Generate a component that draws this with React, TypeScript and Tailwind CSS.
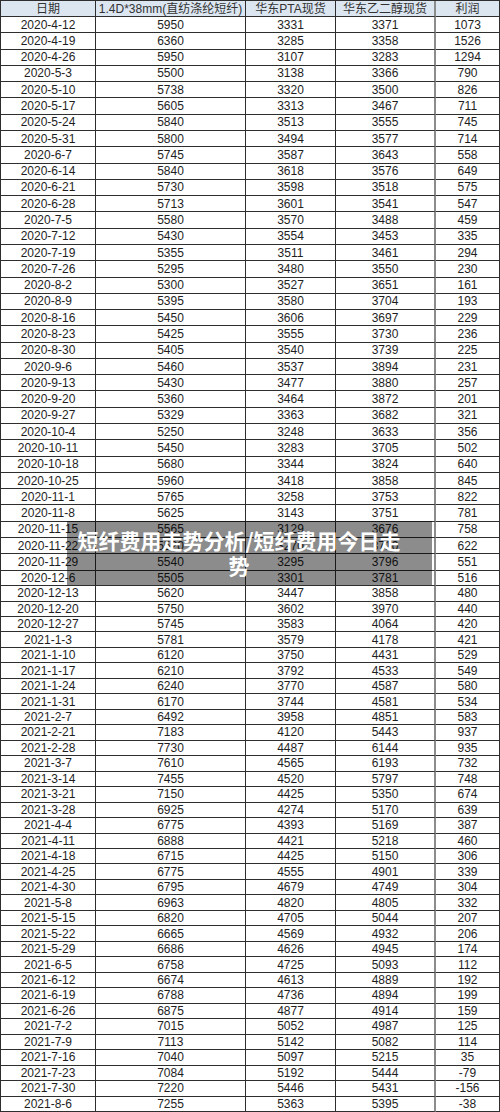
import React from 'react';

// date, 1.4D*38mm fiber, PTA spot, MEG spot, profit
const rows: [string, string, string, string, string][] = [
  ['2020-4-12', '5950', '3331', '3371', '1073'],
  ['2020-4-19', '6360', '3285', '3358', '1526'],
  ['2020-4-26', '5950', '3107', '3283', '1294'],
  ['2020-5-3', '5500', '3138', '3366', '790'],
  ['2020-5-10', '5738', '3320', '3500', '826'],
  ['2020-5-17', '5605', '3313', '3467', '711'],
  ['2020-5-24', '5840', '3513', '3555', '745'],
  ['2020-5-31', '5800', '3494', '3577', '714'],
  ['2020-6-7', '5745', '3587', '3643', '558'],
  ['2020-6-14', '5840', '3618', '3576', '649'],
  ['2020-6-21', '5730', '3598', '3518', '575'],
  ['2020-6-28', '5713', '3601', '3541', '547'],
  ['2020-7-5', '5580', '3570', '3488', '459'],
  ['2020-7-12', '5430', '3554', '3453', '335'],
  ['2020-7-19', '5355', '3511', '3461', '294'],
  ['2020-7-26', '5295', '3480', '3550', '230'],
  ['2020-8-2', '5300', '3527', '3651', '161'],
  ['2020-8-9', '5395', '3580', '3704', '193'],
  ['2020-8-16', '5450', '3606', '3697', '229'],
  ['2020-8-23', '5425', '3555', '3730', '236'],
  ['2020-8-30', '5405', '3540', '3739', '225'],
  ['2020-9-6', '5460', '3537', '3894', '231'],
  ['2020-9-13', '5430', '3477', '3880', '257'],
  ['2020-9-20', '5360', '3464', '3872', '201'],
  ['2020-9-27', '5329', '3363', '3682', '321'],
  ['2020-10-4', '5250', '3248', '3633', '356'],
  ['2020-10-11', '5450', '3283', '3705', '502'],
  ['2020-10-18', '5680', '3344', '3824', '640'],
  ['2020-10-25', '5960', '3418', '3858', '845'],
  ['2020-11-1', '5765', '3258', '3753', '822'],
  ['2020-11-8', '5625', '3143', '3751', '781'],
  ['2020-11-15', '5565', '3129', '3676', '758'],
  ['2020-11-22', '5520', '3270', '3710', '622'],
  ['2020-11-29', '5540', '3295', '3796', '551'],
  ['2020-12-6', '5505', '3301', '3781', '516'],
  ['2020-12-13', '5620', '3447', '3858', '480'],
  ['2020-12-20', '5750', '3602', '3970', '440'],
  ['2020-12-27', '5745', '3583', '4064', '420'],
  ['2021-1-3', '5781', '3579', '4178', '421'],
  ['2021-1-10', '6120', '3750', '4431', '529'],
  ['2021-1-17', '6210', '3792', '4533', '549'],
  ['2021-1-24', '6240', '3770', '4587', '580'],
  ['2021-1-31', '6170', '3744', '4581', '534'],
  ['2021-2-7', '6492', '3958', '4851', '583'],
  ['2021-2-21', '7183', '4120', '5443', '937'],
  ['2021-2-28', '7730', '4487', '6144', '935'],
  ['2021-3-7', '7610', '4565', '6193', '732'],
  ['2021-3-14', '7455', '4520', '5797', '748'],
  ['2021-3-21', '7150', '4425', '5350', '674'],
  ['2021-3-28', '6925', '4274', '5170', '639'],
  ['2021-4-4', '6775', '4393', '5169', '387'],
  ['2021-4-11', '6888', '4421', '5218', '460'],
  ['2021-4-18', '6715', '4425', '5150', '306'],
  ['2021-4-25', '6775', '4555', '4901', '339'],
  ['2021-4-30', '6795', '4679', '4749', '304'],
  ['2021-5-8', '6963', '4820', '4805', '332'],
  ['2021-5-15', '6820', '4705', '5044', '207'],
  ['2021-5-22', '6665', '4569', '4932', '206'],
  ['2021-5-29', '6686', '4626', '4945', '174'],
  ['2021-6-5', '6758', '4725', '5093', '112'],
  ['2021-6-12', '6674', '4613', '4889', '192'],
  ['2021-6-19', '6788', '4736', '4894', '199'],
  ['2021-6-26', '6875', '4877', '4914', '159'],
  ['2021-7-2', '7015', '5052', '4987', '125'],
  ['2021-7-9', '7113', '5142', '5082', '114'],
  ['2021-7-16', '7040', '5097', '5215', '35'],
  ['2021-7-23', '7084', '5192', '5444', '-79'],
  ['2021-7-30', '7220', '5446', '5431', '-156'],
  ['2021-8-6', '7255', '5363', '5395', '-38'],
];

const headers = ['日期', '1.4D*38mm(直纺涤纶短纤)', '华东PTA现货', '华东乙二醇现货', '利润'];

const gridCols = 'grid grid-cols-[95px_150px_90px_100px_64px]';

function Cell({ children, col }: { children: React.ReactNode; col: number }) {
  return (
    <div
      className={
        'flex items-center justify-center whitespace-nowrap overflow-hidden border-b border-[#2e2e2e] ' +
        (col === 3 ? 'border-r-2 border-r-[#8c8c8c]' : 'border-r')
      }
    >
      {children}
    </div>
  );
}

export default function App() {
  return (
    <div
      className="relative w-[500px] h-[1112px] overflow-hidden bg-white text-[12px] text-[#1e1e1e]"
      style={{ fontFamily: '"Liberation Sans", "Noto Sans CJK SC", sans-serif' }}
    >
      <div className="border-l border-t border-[#2e2e2e]">
        <div className={`${gridCols} h-[16px] bg-[#dce6f1] text-[#333]`}>
          {headers.map((h, i) => (
            <Cell key={h} col={i}>
              {h}
            </Cell>
          ))}
        </div>
        {rows.map((r, idx) => (
          // the scan's upper half has slightly taller rows than the lower half
          <div key={r[0]} className={`${gridCols} ${idx < 34 ? 'h-[16.29px]' : 'h-[15.47px]'}`}>
            {r.map((v, i) => (
              <Cell key={i} col={i}>
                {v}
              </Cell>
            ))}
          </div>
        ))}
      </div>

      {/* title overlay */}
      <div className="absolute left-[67px] top-[521px] w-[365px] bg-black/45 pl-[9px] pr-[30px] py-[7px]">
        <p
          className="text-center text-white font-bold text-[21px] leading-[25px]"
          style={{ fontFamily: '"Noto Sans CJK SC", sans-serif' }}
        >
          短纤费用走势分析/短纤费用今日走势
        </p>
      </div>
    </div>
  );
}
